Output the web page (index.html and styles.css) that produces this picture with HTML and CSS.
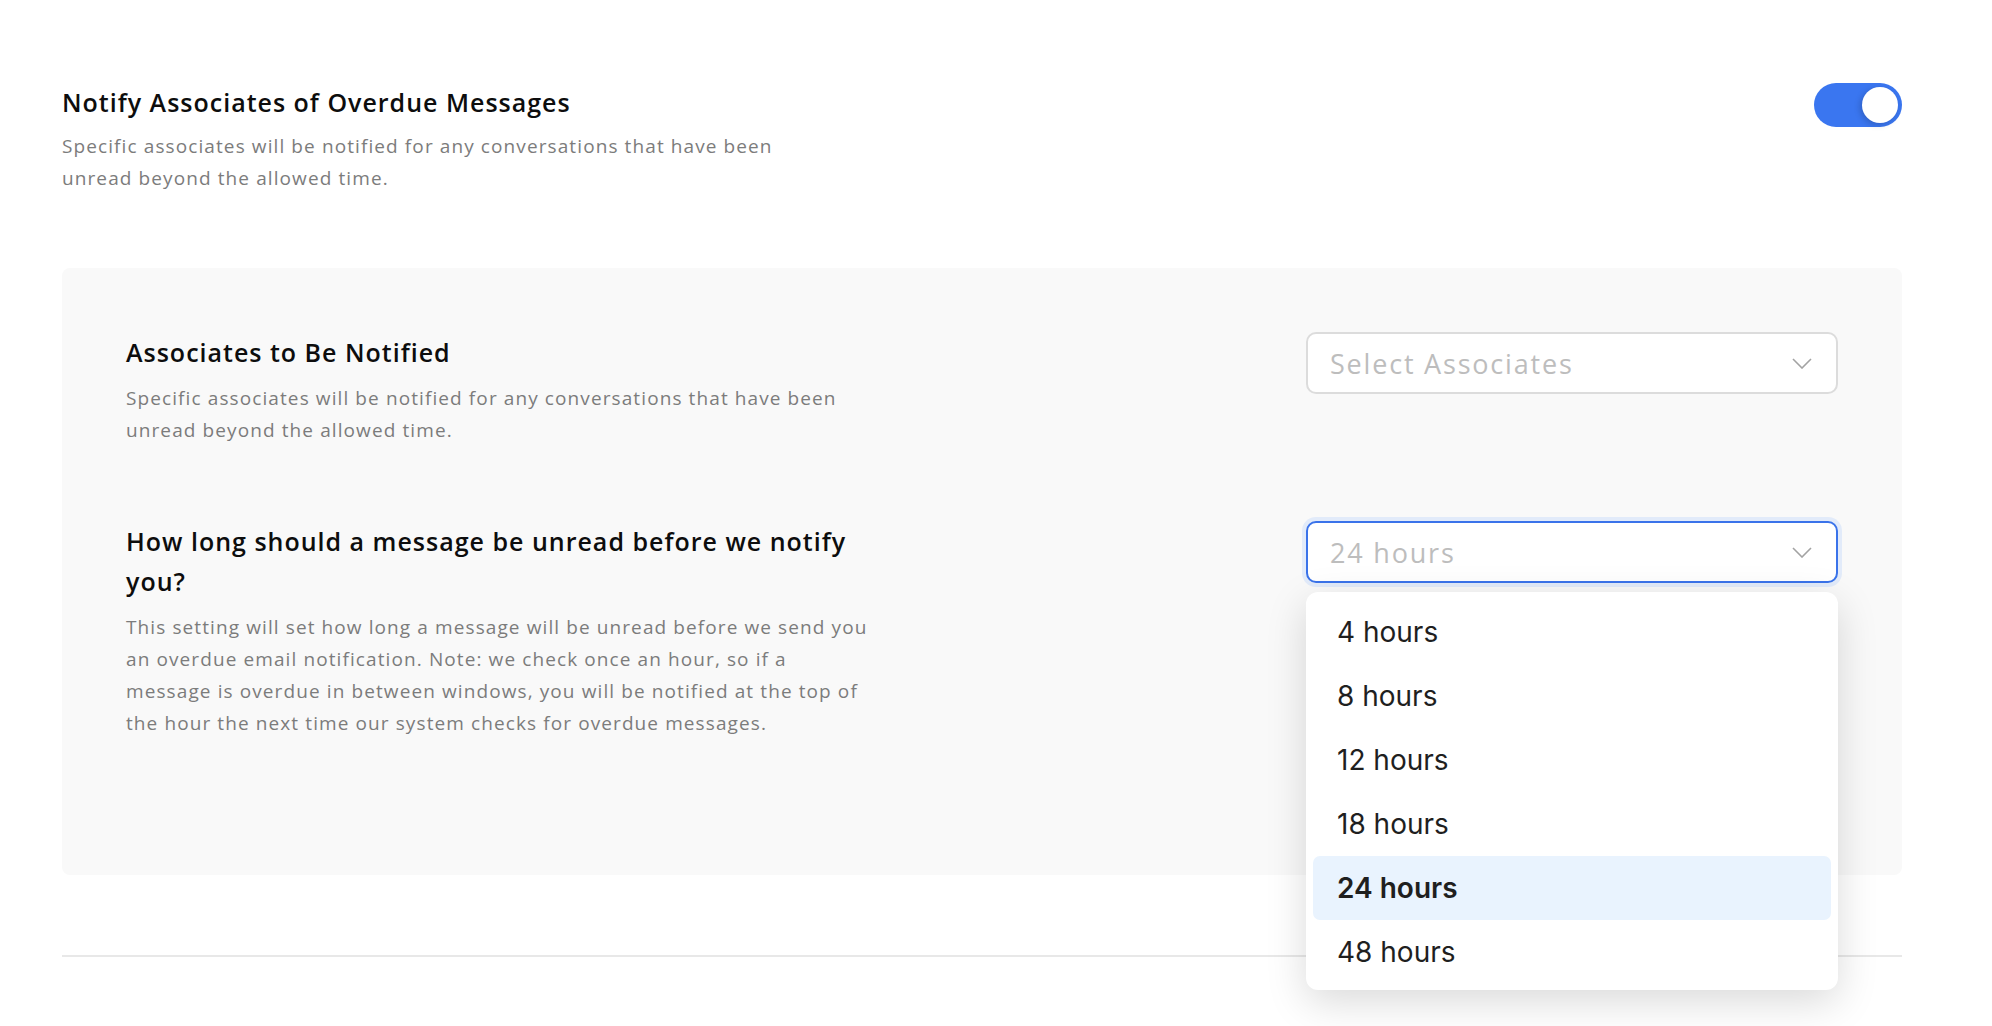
FILE: index.html
```html
<!DOCTYPE html>
<html>
    <head>
        <link rel="stylesheet" href="styles.css">
    </head>
    <body>
        <main class="settings">
            <section class="setting">
                <div class="setting-text">
                    <h2 class="title">Notify Associates of Overdue Messages</h2>
                    <p class="desc">Specific associates will be notified for any conversations that have been unread beyond the allowed time.</p>
                </div>
                <button class="toggle toggle-on" type="button" aria-pressed="true">
                    <span class="knob"></span>
                </button>
            </section>

            <div class="panel">
                <div class="field">
                    <div class="setting-text">
                        <h3 class="title">Associates to Be Notified</h3>
                        <p class="desc">Specific associates will be notified for any conversations that have been unread beyond the allowed time.</p>
                    </div>
                    <div class="select-wrap">
                        <div class="select">
                            <span class="select-value">Select Associates</span>
                            <svg class="chevron" width="20" height="11" viewBox="0 0 20 11"><path d="M1 1l9 9 9-9" fill="none" stroke="#a3a3a3" stroke-width="1.6"/></svg>
                        </div>
                    </div>
                </div>

                <div class="field">
                    <div class="setting-text">
                        <h3 class="title">How long should a message be unread before we notify you?</h3>
                        <p class="desc">This setting will set how long a message will be unread before we send you an overdue email notification. Note: we check once an hour, so if a message is overdue in between windows, you will be notified at the top of the hour the next time our system checks for overdue messages.</p>
                    </div>
                    <div class="select-wrap">
                        <div class="select select-open">
                            <span class="select-value">24 hours</span>
                            <svg class="chevron" width="20" height="11" viewBox="0 0 20 11"><path d="M1 1l9 9 9-9" fill="none" stroke="#a3a3a3" stroke-width="1.6"/></svg>
                        </div>
                        <ul class="menu">
                            <li class="menu-item">4 hours</li>
                            <li class="menu-item">8 hours</li>
                            <li class="menu-item">12 hours</li>
                            <li class="menu-item">18 hours</li>
                            <li class="menu-item menu-item-active">24 hours</li>
                            <li class="menu-item">48 hours</li>
                        </ul>
                    </div>
                </div>
            </div>

            <hr class="divider">
        </main>
    </body>
</html>
```

FILE: styles.css
```css
body {
    margin: 0;
    background: #ffffff;
    font-family: 'Open Sans', 'Liberation Sans', sans-serif;
    color: #111111;
}

.settings {
    box-sizing: border-box;
    min-height: 100vh;
    padding: 82px 90px 0 62px;
}

.setting {
    display: flex;
    justify-content: space-between;
    align-items: flex-start;
}

.setting-text {
    max-width: 748px;
}

.title {
    margin: 0;
    font-size: 25px;
    font-weight: 600;
    line-height: 40px;
    letter-spacing: 1px;
    color: #0d0d0d;
}

.desc {
    margin: 8px 0 0 0;
    font-size: 19px;
    line-height: 32px;
    letter-spacing: 1.1px;
    color: #7c7c7c;
}

/* toggle */
.toggle {
    position: relative;
    width: 88px;
    height: 44px;
    margin-top: 1px;
    border: none;
    border-radius: 22px;
    padding: 0;
    background: #3a76f0;
    cursor: pointer;
}

.knob {
    position: absolute;
    top: 4px;
    right: 4px;
    width: 36px;
    height: 36px;
    border-radius: 50%;
    background: #ffffff;
    box-shadow: -2px 2px 6px rgba(0, 0, 0, 0.18);
}

/* grey panel */
.panel {
    margin-top: 74px;
    padding: 64px 64px 136px 64px;
    background: #f9f9f9;
    border-radius: 8px;
}

.field {
    display: flex;
    justify-content: space-between;
    align-items: flex-start;
}

.field + .field {
    margin-top: 75px;
}

.field .desc {
    margin-top: 10px;
}

.select-wrap {
    position: relative;
    width: 532px;
}

.select {
    display: flex;
    align-items: center;
    justify-content: space-between;
    box-sizing: border-box;
    height: 62px;
    padding: 0 24px 0 22px;
    background: #ffffff;
    border: 2px solid #dcdcdc;
    border-radius: 10px;
}

.select-value {
    font-size: 27px;
    letter-spacing: 1.8px;
    color: #bdbdbd;
}

.select-open {
    border-color: #3a73ea;
    box-shadow: 0 0 0 4px #e2ebfa;
}

.chevron {
    display: block;
}

/* dropdown */
.menu {
    position: absolute;
    top: 71px;
    left: 0;
    right: 0;
    margin: 0;
    padding: 8px 7px 6px 7px;
    list-style: none;
    background: #ffffff;
    border-radius: 12px;
    box-shadow: 0 12px 40px rgba(0, 0, 0, 0.15);
    z-index: 2;
}

.menu-item {
    height: 64px;
    padding-left: 24px;
    display: flex;
    align-items: center;
    font-family: Inter, 'Noto Sans', sans-serif;
    font-size: 28px;
    color: #1f1f1f;
    border-radius: 7px;
}

.menu-item-active {
    background: #e9f3fe;
    font-weight: 600;
}

.divider {
    margin: 80px 0 0 0;
    border: none;
    height: 2px;
    background: #e8e8e8;
}
```
